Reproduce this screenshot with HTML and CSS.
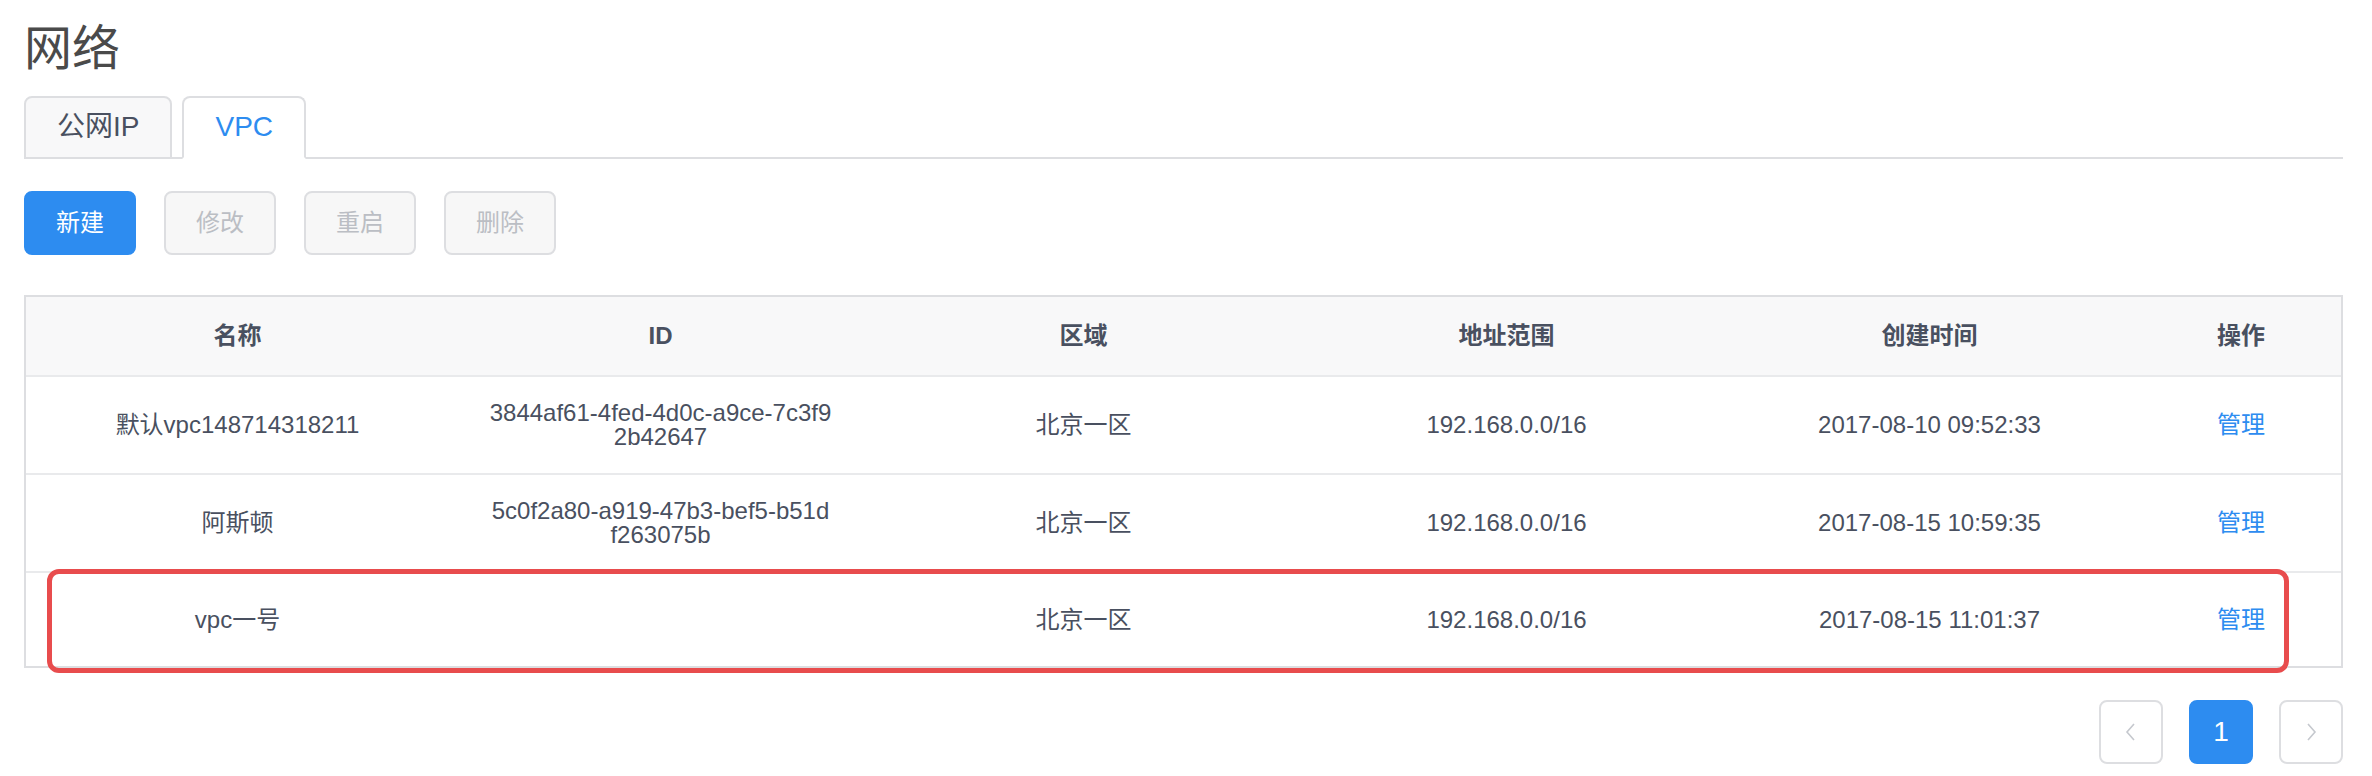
FILE: index.html
```html
<!DOCTYPE html>
<html lang="zh-CN">
<head>
<meta charset="utf-8">
<title>网络</title>
<link rel="stylesheet" href="styles.css">
</head>
<body>
<div class="page">
  <h1 class="title">网络</h1>

  <div class="tabs">
    <div class="tab">公网IP</div>
    <div class="tab active">VPC</div>
  </div>

  <div class="toolbar">
    <button class="btn primary">新建</button>
    <button class="btn" disabled>修改</button>
    <button class="btn" disabled>重启</button>
    <button class="btn" disabled>删除</button>
  </div>

  <div class="table-wrap">
    <table class="tbl">
      <colgroup>
        <col><col><col><col><col><col class="col-op">
      </colgroup>
      <thead>
        <tr>
          <th>名称</th>
          <th>ID</th>
          <th>区域</th>
          <th>地址范围</th>
          <th>创建时间</th>
          <th>操作</th>
        </tr>
      </thead>
      <tbody>
        <tr>
          <td>默认vpc148714318211</td>
          <td>3844af61-4fed-4d0c-a9ce-7c3f9<br>2b42647</td>
          <td>北京一区</td>
          <td>192.168.0.0/16</td>
          <td>2017-08-10 09:52:33</td>
          <td><a class="link">管理</a></td>
        </tr>
        <tr>
          <td>阿斯顿</td>
          <td>5c0f2a80-a919-47b3-bef5-b51d<br>f263075b</td>
          <td>北京一区</td>
          <td>192.168.0.0/16</td>
          <td>2017-08-15 10:59:35</td>
          <td><a class="link">管理</a></td>
        </tr>
        <tr>
          <td>vpc一号</td>
          <td></td>
          <td>北京一区</td>
          <td>192.168.0.0/16</td>
          <td>2017-08-15 11:01:37</td>
          <td><a class="link">管理</a></td>
        </tr>
      </tbody>
    </table>
    <div class="highlight"></div>
  </div>

  <div class="pager">
    <div class="page-item">
      <svg width="12" height="20" viewBox="0 0 12 20"><polyline points="9,2 2,10 9,18" fill="none" stroke="#c5c8ce" stroke-width="1.6"/></svg>
    </div>
    <div class="page-item current">1</div>
    <div class="page-item">
      <svg width="12" height="20" viewBox="0 0 12 20"><polyline points="3,2 10,10 3,18" fill="none" stroke="#c5c8ce" stroke-width="1.6"/></svg>
    </div>
  </div>
</div>
</body>
</html>
```

FILE: styles.css
```css
* {
  box-sizing: border-box;
}

html, body {
  margin: 0;
  padding: 0;
  background: #ffffff;
}

body {
  font-family: "Liberation Sans", "Noto Sans CJK SC", sans-serif;
  color: #495060;
}

.page {
  padding: 25px 29px 0 24px;
}

.title {
  margin: 0;
  font-size: 48px;
  line-height: 48px;
  height: 48px;
  font-weight: normal;
  color: #4a4a4a;
}

.tabs {
  margin-top: 23px;
  display: flex;
  gap: 10px;
  border-bottom: 2px solid #dddee1;
  height: 63px;
}

.tab {
  height: 63px;
  padding: 0 31px;
  border: 2px solid #dddee1;
  border-radius: 8px 8px 0 0;
  background: #f8f8f9;
  font-size: 28px;
  line-height: 57px;
  color: #495060;
}

.tab.active {
  background: #ffffff;
  border-bottom-color: #ffffff;
  color: #2d8cf0;
}

.toolbar {
  margin-top: 32px;
  display: flex;
  gap: 28px;
}

.btn {
  width: 112px;
  height: 64px;
  padding: 0;
  border: 2px solid #dddee1;
  border-radius: 8px;
  background: #f7f7f7;
  color: #bbbec4;
  font-family: "Liberation Sans", "Noto Sans CJK SC", sans-serif;
  font-size: 24px;
  line-height: 60px;
}

.btn.primary {
  background: #2d8cf0;
  border-color: #2d8cf0;
  color: #ffffff;
}

.table-wrap {
  position: relative;
  margin-top: 40px;
  border: 2px solid #dddee1;
}

.tbl {
  width: 100%;
  table-layout: fixed;
  border-collapse: separate;
  border-spacing: 0;
  font-size: 24px;
  line-height: 24px;
}

.col-op {
  width: 200px;
}

.tbl th {
  height: 80px;
  background: #f8f8f9;
  border-bottom: 2px solid #e9eaec;
  font-weight: bold;
  color: #495060;
  text-align: center;
  padding: 0 36px;
}

.tbl td {
  height: 98px;
  border-bottom: 2px solid #e9eaec;
  text-align: center;
  vertical-align: middle;
  padding: 0 36px;
  color: #495060;
}

.tbl tbody tr:last-child td {
  border-bottom: 0;
  height: 93px;
}

.link {
  color: #2d8cf0;
  cursor: pointer;
}

.highlight {
  position: absolute;
  left: 21px;
  top: 272px;
  width: 2242px;
  height: 104px;
  border: 5px solid #e84c4d;
  border-radius: 12px;
  pointer-events: none;
}

.pager {
  margin-top: 32px;
  display: flex;
  justify-content: flex-end;
  gap: 26px;
}

.page-item {
  width: 64px;
  height: 64px;
  border: 2px solid #dddee1;
  border-radius: 8px;
  background: #ffffff;
  display: flex;
  align-items: center;
  justify-content: center;
  font-size: 28px;
  color: #495060;
}

.page-item.current {
  background: #2d8cf0;
  border-color: #2d8cf0;
  color: #ffffff;
}
```
